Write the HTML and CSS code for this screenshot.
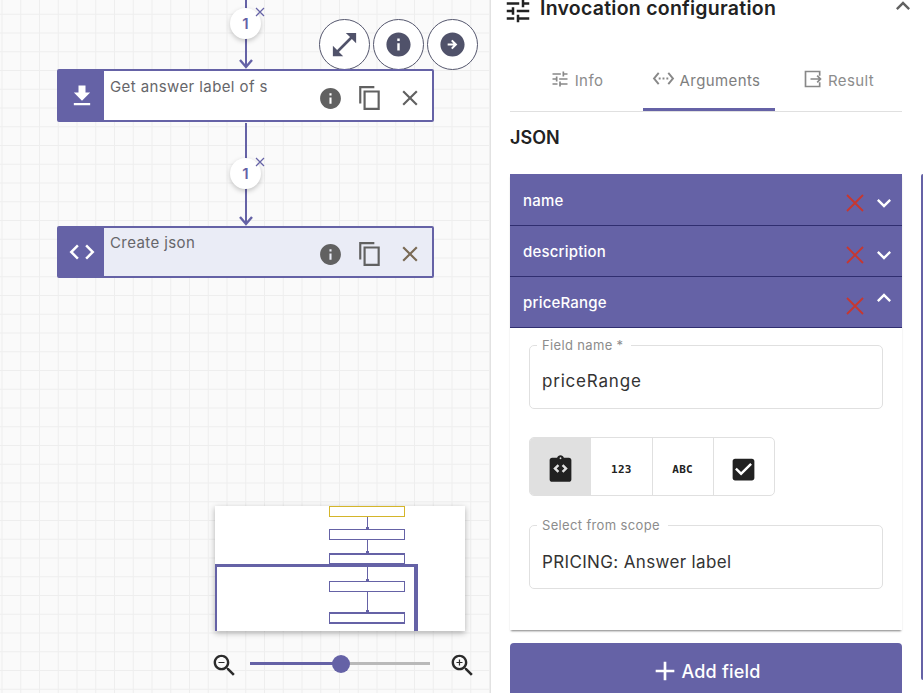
FILE: index.html
```html
<!DOCTYPE html>
<html lang="en">
<head>
<meta charset="utf-8">
<title>Invocation configuration</title>
<link rel="stylesheet" href="styles.css">
</head>
<body>
<svg class="defs" width="0" height="0" aria-hidden="true">
  <symbol id="i-info" viewBox="0 0 24 24"><path d="M12 2C6.48 2 2 6.48 2 12s4.48 10 10 10 10-4.48 10-10S17.52 2 12 2zm1 15h-2v-6h2v6zm0-8h-2V7h2v2z"/></symbol>
  <symbol id="i-copy" viewBox="0 0 24 24"><path d="M16 1H2v16h2V3h12V1zm5 4H6v18h15V5zm-2 16H8V7h11v14z"/></symbol>
  <symbol id="i-close" viewBox="0 0 24 24"><path d="M19 6.41 17.59 5 12 10.59 6.41 5 5 6.41 10.59 12 5 17.59 6.41 19 12 13.41 17.59 19 19 17.59 13.41 12z"/></symbol>
  <symbol id="i-tune" viewBox="0 0 24 24"><path d="M3 17v2h6v-2H3zM3 5v2h10V5H3zm10 16v-2h8v-2h-8v-2h-2v6h2zM7 9v2H3v2h4v2h2V9H7zm14 4v-2H11v2h10zm-6-4h2V7h4V5h-4V3h-2v6z"/></symbol>
  <symbol id="i-more" viewBox="0 0 24 24"><path d="M16.59 8.59 12 13.17 7.41 8.59 6 10l6 6 6-6z"/></symbol>
  <symbol id="i-less" viewBox="0 0 24 24"><path d="M12 8l-6 6 1.41 1.41L12 10.83l4.59 4.58L18 14z"/></symbol>
</svg>

<div class="app">
  <main class="canvas">
    <div class="edge edge-a"></div>
    <div class="edge edge-b"></div>
    <svg class="arrow arrow-a" viewBox="0 0 14 14"><path d="M1 5l6 7 6-7"/></svg>
    <svg class="arrow arrow-b" viewBox="0 0 14 14"><path d="M1 5l6 7 6-7"/></svg>

    <div class="badge badge-a">1</div>
    <div class="badge badge-b">1</div>
    <svg class="badge-x badge-x-a" viewBox="0 0 10 10"><path d="M1 1l8 8M9 1l-8 8"/></svg>
    <svg class="badge-x badge-x-b" viewBox="0 0 10 10"><path d="M1 1l8 8M9 1l-8 8"/></svg>

    <div class="tools">
      <button class="tool"><svg class="tool-ic tool-ic-lg" viewBox="0 0 24 24"><path d="M21 11V3h-8l3.29 3.29-10 10L3 13v8h8l-3.29-3.29 10-10z"/></svg></button>
      <button class="tool"><svg class="tool-ic" viewBox="0 0 24 24"><use href="#i-info"/></svg></button>
      <button class="tool"><svg class="tool-ic" viewBox="0 0 24 24"><path d="M12 2C6.48 2 2 6.48 2 12s4.48 10 10 10 10-4.48 10-10S17.52 2 12 2zm0 14-1.2-1.2 1.95-1.95H8v-1.7h4.75L10.8 9.2 12 8l4 4-4 4z"/></svg></button>
    </div>

    <article class="node node-a">
      <div class="node-side"><svg class="side-ic" viewBox="0 0 24 24"><path d="M19 9h-4V3H9v6H5l7 7 7-7zM5 18v2h14v-2H5z"/></svg></div>
      <div class="node-body">
        <div class="node-title">Get answer label of s</div>
        <div class="node-actions">
          <svg class="act-info" viewBox="0 0 24 24"><use href="#i-info"/></svg>
          <svg class="act-copy" viewBox="0 0 24 24"><use href="#i-copy"/></svg>
          <svg class="act-close" viewBox="0 0 24 24"><use href="#i-close"/></svg>
        </div>
      </div>
    </article>

    <article class="node node-b">
      <div class="node-side"><svg class="side-ic side-code" viewBox="0 0 24 24"><path d="M9.4 16.6 4.8 12l4.6-4.6L8 6l-6 6 6 6 1.4-1.4zm5.2 0 4.6-4.6-4.6-4.6L16 6l6 6-6 6-1.4-1.4z"/></svg></div>
      <div class="node-body">
        <div class="node-title">Create json</div>
        <div class="node-actions">
          <svg class="act-info" viewBox="0 0 24 24"><use href="#i-info"/></svg>
          <svg class="act-copy" viewBox="0 0 24 24"><use href="#i-copy"/></svg>
          <svg class="act-close act-warm" viewBox="0 0 24 24"><use href="#i-close"/></svg>
        </div>
      </div>
    </article>

    <div class="minimap">
      <div class="mini-line ml-1"></div>
      <div class="mini-line ml-2"></div>
      <div class="mini-line ml-3"></div>
      <div class="mini-line ml-4"></div>
      <div class="mini-node mn-1"></div>
      <div class="mini-node mn-2"></div>
      <div class="mini-node mn-3"></div>
      <div class="mini-node mn-4"></div>
      <div class="mini-node mn-5"></div>
      <div class="mini-view"></div>
    </div>

    <div class="zoombar">
      <svg class="zoom-ic" viewBox="0 0 24 24"><path d="M15.5 14h-.79l-.28-.27C15.41 12.59 16 11.11 16 9.5 16 5.91 13.09 3 9.5 3S3 5.91 3 9.5 5.91 16 9.5 16c1.61 0 3.09-.59 4.23-1.57l.27.28v.79l5 4.99L20.49 19l-4.99-5zm-6 0C7.01 14 5 11.99 5 9.5S7.01 5 9.5 5 14 7.01 14 9.5 11.99 14 9.5 14zM7 9h5v1H7z"/></svg>
      <div class="slider"><div class="slider-fill"></div><div class="slider-thumb"></div></div>
      <svg class="zoom-ic" viewBox="0 0 24 24"><path d="M15.5 14h-.79l-.28-.27C15.41 12.59 16 11.11 16 9.5 16 5.91 13.09 3 9.5 3S3 5.91 3 9.5 5.91 16 9.5 16c1.61 0 3.09-.59 4.23-1.57l.27.28v.79l5 4.99L20.49 19l-4.99-5zm-6 0C7.01 14 5 11.99 5 9.5S7.01 5 9.5 5 14 7.01 14 9.5 11.99 14 9.5 14zM12 10h-2v2H9v-2H7V9h2V7h1v2h2v1z"/></svg>
    </div>
  </main>

  <aside class="panel">
    <header class="panel-head">
      <svg class="head-ic" viewBox="0 0 24 24"><use href="#i-tune"/></svg>
      <h1 class="head-title">Invocation configuration</h1>
      <svg class="head-chev" viewBox="0 0 24 24"><use href="#i-less"/></svg>
    </header>

    <nav class="tabs">
      <div class="tab tab-info"><svg class="tab-ic" viewBox="0 0 24 24"><use href="#i-tune"/></svg><span>Info</span></div>
      <div class="tab tab-args"><svg class="tab-ic tab-ic-args" viewBox="0 0 24 24"><path d="M7.77 6.76 6.23 5.48.82 12l5.41 6.52 1.54-1.28L3.42 12l4.35-5.24zM7 13h2v-2H7v2zm10-2h-2v2h2v-2zm-6 2h2v-2h-2v2zm6.77-7.52-1.54 1.28L20.58 12l-4.35 5.24 1.54 1.28L23.18 12l-5.41-6.52z"/></svg><span>Arguments</span></div>
      <div class="tab tab-result"><svg class="tab-ic tab-ic-res" viewBox="0 0 24 24"><path d="M20 8V3H3v18h17v-5M9 12h12M17 8l4 4-4 4"/></svg><span>Result</span></div>
    </nav>

    <h2 class="json-title">JSON</h2>

    <section class="accordion">
      <div class="acc-row"><span class="acc-label">name</span>
        <svg class="acc-x" viewBox="0 0 18 18"><path d="M1 1l16 16M17 1L1 17"/></svg>
        <svg class="acc-chev" viewBox="0 0 24 24"><use href="#i-more"/></svg></div>
      <div class="acc-row"><span class="acc-label">description</span>
        <svg class="acc-x" viewBox="0 0 18 18"><path d="M1 1l16 16M17 1L1 17"/></svg>
        <svg class="acc-chev" viewBox="0 0 24 24"><use href="#i-more"/></svg></div>
      <div class="acc-row"><span class="acc-label">priceRange</span>
        <svg class="acc-x" viewBox="0 0 18 18"><path d="M1 1l16 16M17 1L1 17"/></svg>
        <svg class="acc-chev acc-chev-up" viewBox="0 0 24 24"><use href="#i-less"/></svg></div>

      <div class="acc-body">
        <fieldset class="field field-name">
          <legend class="field-legend">Field name *</legend>
          <div class="field-value">priceRange</div>
        </fieldset>

        <div class="toggle">
          <div class="toggle-cell is-on"><svg class="toggle-ic toggle-ic-clip" viewBox="0 0 24 24"><path d="M19 3h-4.18C14.4 1.84 13.3 1 12 1s-2.4.84-2.82 2H5c-1.1 0-2 .9-2 2v16c0 1.1.9 2 2 2h14c1.1 0 2-.9 2-2V5c0-1.1-.9-2-2-2zm-7-.25c.41 0 .75.34.75.75s-.34.75-.75.75-.75-.34-.75-.75.34-.75.75-.75zM11 14.17l-1.41 1.42L6 12l3.59-3.59L11 9.83 8.83 12 11 14.17zm3.41 1.42L13 14.17 15.17 12 13 9.83l1.41-1.42L18 12l-3.59 3.59z"/></svg></div>
          <div class="toggle-cell"><span class="toggle-text">123</span></div>
          <div class="toggle-cell"><span class="toggle-text">ABC</span></div>
          <div class="toggle-cell"><svg class="toggle-ic" viewBox="0 0 24 24"><path d="M19 3H5c-1.11 0-2 .9-2 2v14c0 1.1.89 2 2 2h14c1.11 0 2-.9 2-2V5c0-1.1-.89-2-2-2zm-9 14-5-5 1.41-1.41L10 14.17l7.59-7.59L19 8l-9 9z"/></svg></div>
        </div>

        <fieldset class="field field-scope">
          <legend class="field-legend">Select from scope</legend>
          <div class="field-value">PRICING: Answer label</div>
        </fieldset>
      </div>
    </section>

    <button class="add-btn"><svg class="add-ic" viewBox="0 0 24 24"><path d="M19 13h-6v6h-2v-6H5v-2h6V5h2v6h6v2z"/></svg><span>Add field</span></button>

    <div class="edge-strip"></div>
  </aside>
</div>
</body>
</html>
```

FILE: styles.css
```css
* { box-sizing: border-box; }
html, body { margin: 0; height: 100%; overflow: hidden; background: #fff; }
body { font-family: Inter, "Liberation Sans", sans-serif; color: #222; }
.defs { position: absolute; }
button { font-family: inherit; }

.app { display: flex; width: 923px; height: 693px; overflow: hidden; }

/* Canvas */
.canvas {
  position: relative;
  flex: 0 0 491px;
  height: 693px;
  overflow: hidden;
  background-color: #fafafa;
  background-image:
    linear-gradient(to right, #eeeeee 1px, transparent 1px),
    linear-gradient(to bottom, #eeeeee 1px, transparent 1px);
  background-size: 18.75px 18.75px;
  background-position: 1.5px 13.75px;
  border-right: 1px solid #e2e2e2;
}
.edge { position: absolute; left: 244.5px; width: 2px; background: #6562a6; }
.edge-a { top: 0; height: 66px; }
.edge-b { top: 123px; height: 100px; }
.arrow { position: absolute; left: 238.5px; width: 14px; height: 14px; fill: none; stroke: #6562a6; stroke-width: 2.4; }
.arrow-a { top: 55px; }
.arrow-b { top: 212px; }

.badge {
  position: absolute; left: 230px; width: 31px; height: 31px; border-radius: 50%;
  background: #fff; box-shadow: 0 2px 5px rgba(0,0,0,.22);
  color: #6562a6; font-size: 15px; font-weight: 600; text-align: center; line-height: 31px;
}
.badge-a { top: 8px; }
.badge-b { top: 158px; }
.badge-x { position: absolute; left: 255px; width: 10px; height: 10px; fill: none; stroke: #6562a6; stroke-width: 1.2; }
.badge-x-a { top: 7px; }
.badge-x-b { top: 157px; }

.tools { position: absolute; left: 319px; top: 19px; display: flex; gap: 3px; }
.tool {
  width: 51px; height: 51px; border-radius: 50%; border: 1px solid #55576e;
  background: #fff; padding: 0; display: flex; align-items: center; justify-content: center;
}
.tool-ic { width: 29px; height: 29px; fill: #50526a; }
.tool-ic-lg { width: 31px; height: 31px; }

.node {
  position: absolute; left: 57px; width: 377px; height: 53px;
  display: flex; border: 2px solid #6562a6; border-radius: 2px; background: #fff;
}
.node-a { top: 69px; }
.node-b { top: 226px; height: 52px; background: #eaecf6; }
.node-side { flex: 0 0 45px; background: #6562a6; display: flex; align-items: center; justify-content: center; }
.side-ic { width: 28px; height: 28px; fill: #fff; }
.side-code { width: 30px; height: 30px; }
.node-body { flex: 1; position: relative; padding: 6px 0 0 6px; }
.node-b .node-body { padding-top: 5px; }
.node-title { font-size: 15px; line-height: 20px; color: #66666a; letter-spacing: .4px; }
.node-actions { position: absolute; left: 214px; top: 13px; display: flex; align-items: center; }
.node-a .node-actions { top: 14px; }
.act-info { width: 25px; height: 25px; fill: #616161; }
.act-copy { width: 26px; height: 26px; fill: #616161; margin-left: 14px; }
.act-close { width: 26px; height: 26px; fill: #616161; margin-left: 14px; }
.act-warm { fill: #7a6a55; }

.minimap { position: absolute; left: 215px; top: 506px; width: 250px; height: 125px; background: #fff; box-shadow: 0 2px 6px rgba(0,0,0,.3); }
.mini-node { position: absolute; left: 114px; width: 76px; height: 11px; border: 1px solid #6562a6; background: #fff; }
.mn-1 { top: 0; border-color: #d4b52a; }
.mn-2 { top: 23px; }
.mn-3 { top: 47px; height: 11px; border-top-width: 2px; }
.mn-4 { top: 75px; }
.mn-5 { top: 106px; height: 12px; border-top-width: 2px; border-bottom-width: 2px; }
.mini-line { position: absolute; left: 152px; width: 1px; background: #6562a6; }
.mini-line::after { content: ""; position: absolute; left: -1px; bottom: 0; width: 3px; height: 2px; background: #6562a6; }
.ml-1 { top: 11px; height: 12px; }
.ml-2 { top: 34px; height: 13px; }
.ml-3 { top: 58px; height: 17px; }
.ml-4 { top: 86px; height: 20px; }
.mini-view {
  position: absolute; left: 0; top: 58px; width: 203px; height: 67px;
  border-style: solid; border-color: #6562a6; border-width: 3px 4px 0 2px;
}

.zoombar { position: absolute; left: 210px; top: 651px; display: flex; align-items: flex-start; gap: 11px; }
.zoom-ic { width: 29px; height: 29px; fill: #2b2b2b; }
.slider { position: relative; width: 180px; height: 3px; margin: 11px 7px 0 0; background: #b9b9b9; }
.slider-fill { position: absolute; left: 0; top: 0; width: 90px; height: 3px; background: #6562a6; }
.slider-thumb { position: absolute; left: 81.5px; top: -7.5px; width: 18px; height: 18px; border-radius: 50%; background: #6562a6; }

/* Panel */
.panel { position: relative; flex: 1; height: 693px; overflow: hidden; background: #fff; padding: 0 21px 0 19px; }
.panel-head { display: flex; align-items: center; height: 16px; margin-left: -7px; }
.head-ic { flex: none; width: 30px; height: 30px; fill: #222; margin-top: 5px; }
.head-title { margin: 0 0 0 7px; font-size: 19.5px; font-weight: 600; line-height: 16px; color: #222; flex: 1; letter-spacing: .25px; }
.head-chev { flex: none; width: 28px; height: 28px; fill: #616161; margin: -4px -15px 0 0; }

.tabs { display: flex; height: 52px; margin-top: 44px; border-bottom: 1px solid #e0e0e0; }
.tab { display: flex; align-items: center; justify-content: center; gap: 5px; font-size: 15px; letter-spacing: .4px; color: #8c8c8c; height: 51px; padding-bottom: 11px; }
.tab-info { width: 133px; }
.tab-args { width: 132px; padding: 0 6px 8px 0; border-bottom: 3px solid #6562a6; color: #7e7e7e; }
.tab-result { width: 127px; }
.tab-ic { width: 20px; height: 20px; fill: #888; margin-top: -3px; }
.tab-ic-args { width: 23px; height: 23px; }
.tab-ic-res { fill: none; stroke: #888; stroke-width: 2; }

.json-title { margin: 14px 0 0; font-size: 18px; line-height: 24px; font-weight: 600; color: #222; }

.accordion { margin-top: 24px; height: 456px; box-shadow: 0 2px 2px -1px rgba(0,0,0,.5); }
.acc-row { display: flex; align-items: center; height: 51px; background: #6562a6; border-bottom: 1px solid #302e70; padding-left: 13px; }
.acc-row:first-child { height: 52px; }
.acc-label { font-size: 15px; font-weight: 500; letter-spacing: .2px; color: #fff; margin-top: 1px; flex: 1; }
.acc-x { flex: none; width: 18px; height: 18px; fill: none; stroke: #c8372f; stroke-width: 1.8; margin-top: 7px; }
.acc-chev { flex: none; width: 28px; height: 28px; fill: #fff; margin: 7px 4px 0 6px; }
.acc-chev-up { margin-top: -9px; }

.acc-body { display: flex; flex-direction: column; padding: 9px 19px 0; background: #fff; }
.field { margin: 0; padding: 0 0 0 12px; width: 354px; height: 72px; border: 1px solid #e0e0e0; border-radius: 5px; min-inline-size: 0; }
.field-legend { padding: 0 8px 0 5px; margin-left: -5px; font-size: 13px; letter-spacing: .35px; line-height: 16px; color: #8c8c8c; }
.field-value { font-size: 17px; letter-spacing: .35px; line-height: 22px; color: #333; margin-top: 17px; }
.field-name .field-value { letter-spacing: .8px; }
.field-scope { margin-top: 21px; }
.field-scope .field-value { margin-top: 18px; }

.toggle { display: flex; width: 246px; height: 59px; margin-top: 28px; border: 1px solid #e0e0e0; border-radius: 5px; overflow: hidden; }
.toggle-cell { flex: 1; display: flex; align-items: center; justify-content: center; border-left: 1px solid #e0e0e0; }
.toggle-cell:first-child { border-left: 0; background: #e0e0e0; }
.toggle-ic { width: 29px; height: 29px; fill: #212121; margin-top: 5px; }
.toggle-ic-clip { margin-top: 3px; }
.toggle-text { font-family: "DejaVu Sans Mono", monospace; font-weight: 700; font-size: 11px; letter-spacing: .3px; color: #212121; margin-top: 6px; }

.add-btn {
  display: flex; align-items: center; justify-content: center;
  width: 392px; height: 60px; margin-top: 13px; padding: 0 2px 4px 0; border: 0; border-radius: 4px;
  background: #6562a6; color: #fff; font-size: 18px; letter-spacing: .2px; font-weight: 500;
}
.add-ic { width: 32px; height: 32px; fill: #fff; }

.edge-strip { position: absolute; right: 0; top: 174px; width: 2px; height: 506px; background: #6562a6; border-radius: 2px 0 0 2px; }
```
